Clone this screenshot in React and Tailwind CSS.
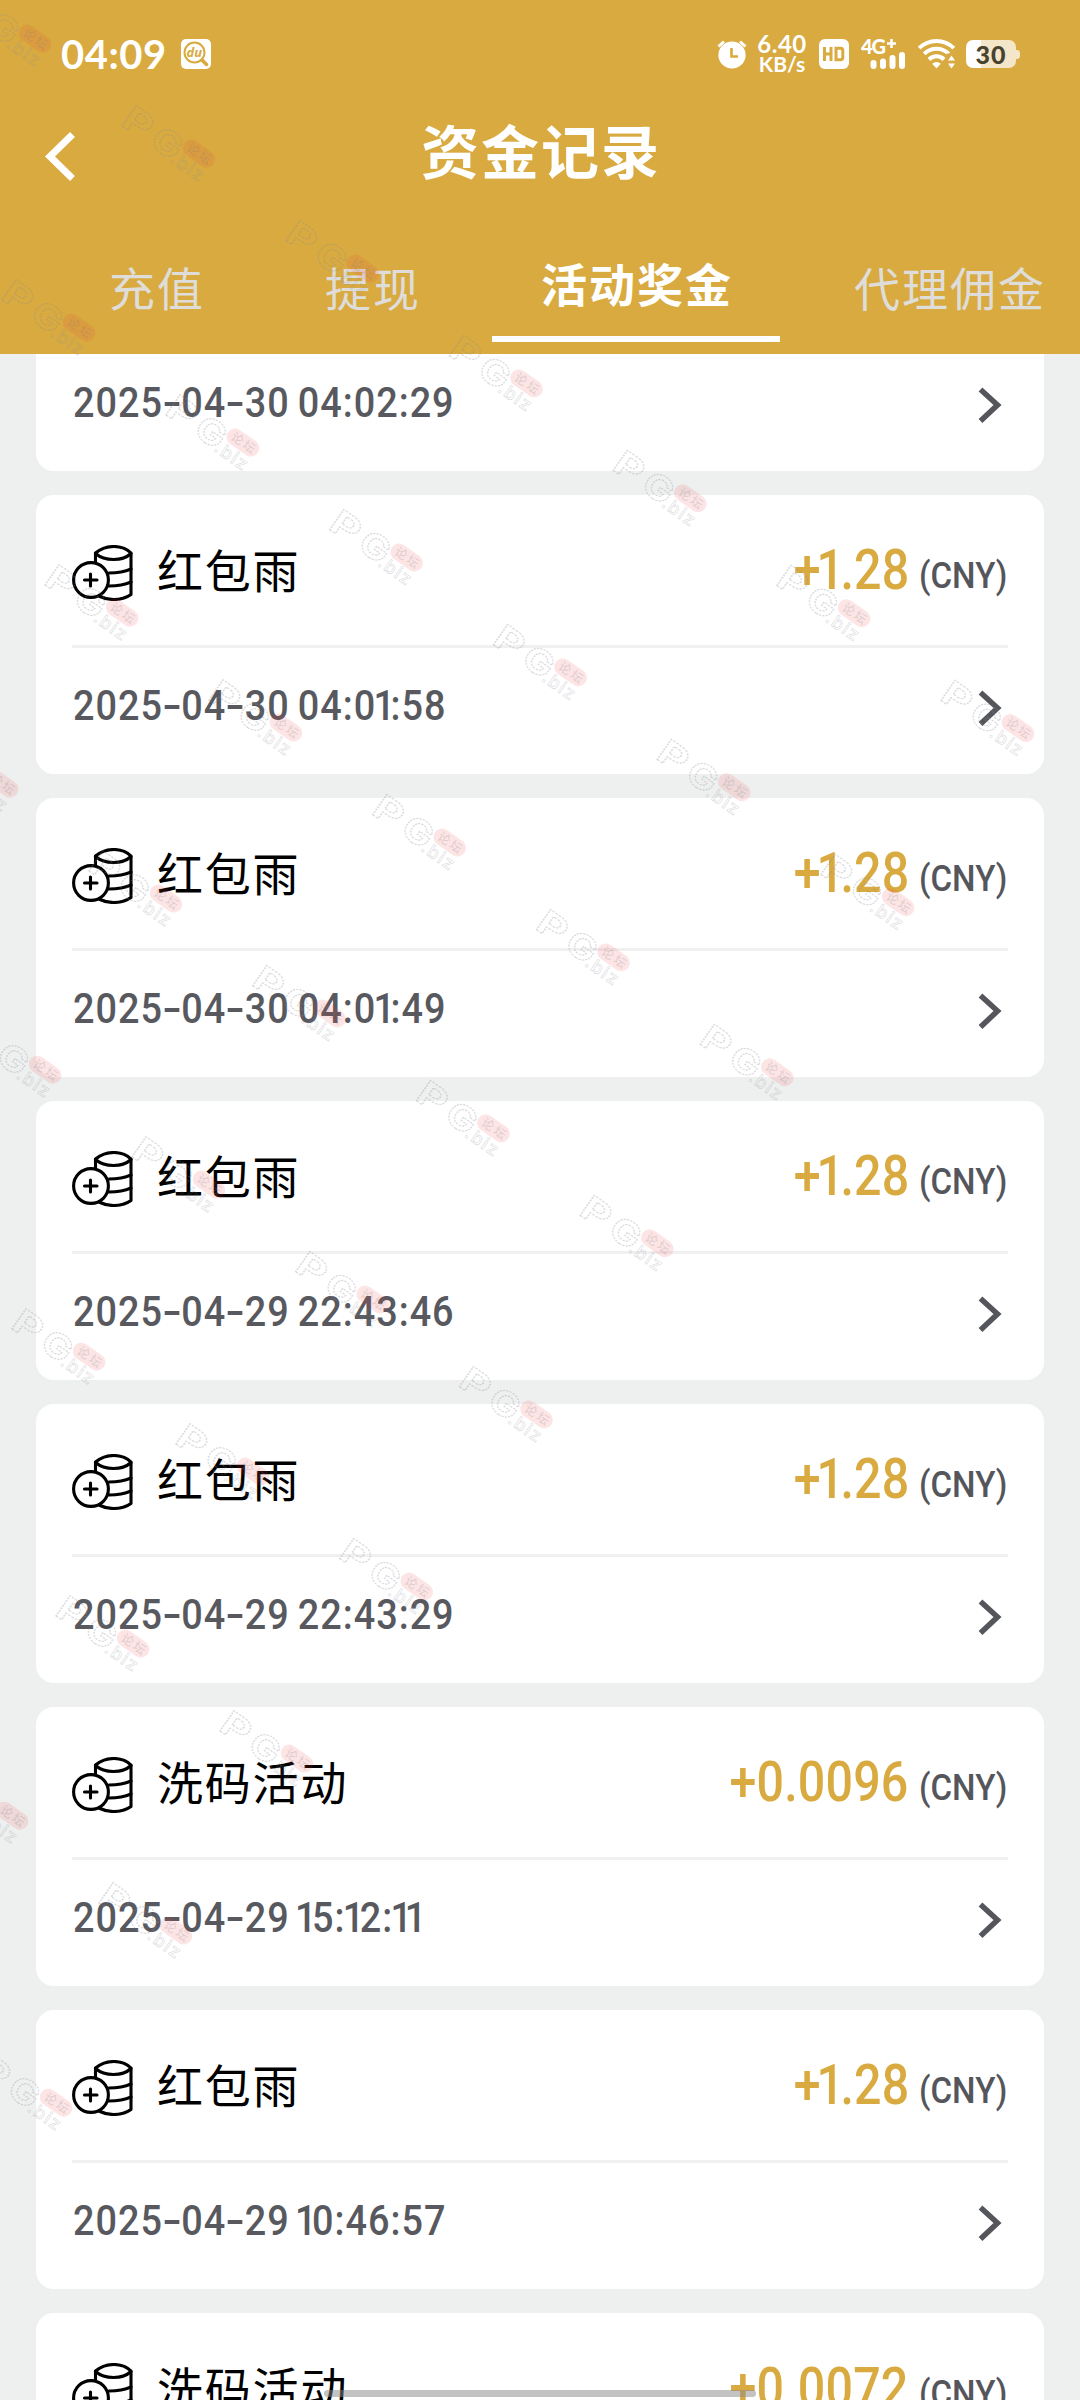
import React from "react";

const CJK = "font-['Noto_Sans_CJK_SC',sans-serif]";

const records = [
  { name: "红包雨", amount: "+1.28", date: "2025-04-30 04:02:29" },
  { name: "红包雨", amount: "+1.28", date: "2025-04-30 04:01:58" },
  { name: "红包雨", amount: "+1.28", date: "2025-04-30 04:01:49" },
  { name: "红包雨", amount: "+1.28", date: "2025-04-29 22:43:46" },
  { name: "红包雨", amount: "+1.28", date: "2025-04-29 22:43:29" },
  { name: "洗码活动", amount: "+0.0096", date: "2025-04-29 15:12:11" },
  { name: "红包雨", amount: "+1.28", date: "2025-04-29 10:46:57" },
  { name: "洗码活动", amount: "+0.0072", date: "" },
];

const tabs = ["充值", "提现", "活动奖金", "代理佣金"];

// Each diagonal of the watermark: first tile's corner and the number of tiles.
const diagonals = [
  [-43, -12, 7],
  [1, 277, 6],
  [44, 562, 5],
  [-76, 733, 5],
  [-33, 1019, 4],
  [11, 1306, 3],
  [55, 1593, 2],
  [-66, 1765, 2],
  [-22, 2052, 1],
];
const tiles = diagonals.flatMap(([x, y, n]) =>
  Array.from({ length: n }, (_, k) => [x + k * 163.8, y + k * 114.9])
);

function Watermark() {
  return (
    <svg className="pointer-events-none absolute inset-0 z-20" width="1080" height="2400" viewBox="0 0 1080 2400">
      {tiles.map(([x, y], i) => (
        <g key={i} transform={`translate(${x} ${y + 21}) rotate(35)`}>
          <g fill="none" stroke="#8a8a96" strokeOpacity="0.33" strokeWidth="1.200" strokeDasharray="2 1" fontFamily="Inter, sans-serif" fontWeight="700" fontSize="34">
            <text x="-1" y="1" textLength="29" lengthAdjust="spacingAndGlyphs">P</text>
            <text x="34" y="1" textLength="30" lengthAdjust="spacingAndGlyphs">G</text>
          </g>
          <text x="61" y="3" fill="none" stroke="#8a8a96" strokeOpacity="0.26" strokeWidth="0.8" fontFamily="Inter, sans-serif" fontWeight="500" fontSize="18" textLength="36">.biz</text>
          <rect x="63" y="-29" width="36" height="17" rx="8.500" fill="#f0383c" fillOpacity="0.13" />
          <text x="68" y="-16" fill="#808080" fillOpacity="0.22" fontFamily="Noto Sans CJK SC, sans-serif" fontWeight="500" fontSize="12.500" textLength="27">论坛</text>
        </g>
      ))}
    </svg>
  );
}

function StatusBar() {
  return (
    <div className="flex h-[108px] items-center pl-[61px] pr-[60px] text-white">
      <span className="font-['Lato',sans-serif] text-[40px] leading-none font-bold tracking-[0.500px]">04:09</span>
      <svg className="ml-[14px]" width="30" height="30" viewBox="0 0 30 30">
        <rect width="30" height="30" rx="5" fill="#fff" />
        <circle cx="13.5" cy="13.5" r="10" fill="none" stroke="#d8aa40" strokeWidth="2" />
        <path d="M21 21l4.5 4.5" stroke="#d8aa40" strokeWidth="3.5" strokeLinecap="round" />
        <text x="13.4" y="18.2" textAnchor="middle" fontSize="13" fontWeight="700" fontStyle="italic" fontFamily="Open Sans, sans-serif" fill="#d8aa40">du</text>
      </svg>
      <div className="ml-auto flex items-center">
        <svg width="30" height="30" viewBox="0 0 30 30">
          <circle cx="15" cy="16" r="13.6" fill="#fff" />
          <path d="M1.5 7.5L7 2.5M28.500 7.500L23 2.500" stroke="#fff" strokeWidth="3" />
          <path d="M14.500 9v8.500H21" fill="none" stroke="#d8aa40" strokeWidth="2.600" />
        </svg>
        <div className="ml-[9px] flex w-[52px] flex-col items-center font-['Lato',sans-serif] text-[24px] leading-[20px] font-bold">
          <span className="tracking-[0.5px]">6.40</span>
          <span className="text-[21px]">KB/s</span>
        </div>
        <svg className="ml-[11px]" width="30" height="30" viewBox="0 0 30 30">
          <rect width="30" height="30" rx="6" fill="#fff" />
          <path d="M5.500 8v14M12 8v14M5.500 15H12M17 9.200h4.500q2.300 0 2.300 2.300v7q0 2.300-2.300 2.300H17z" fill="none" stroke="#d8aa40" strokeWidth="3" />
        </svg>
        <svg className="ml-[12px]" width="46" height="32" viewBox="0 0 46 32">
          <text x="0" y="15.500" fontSize="20" fontWeight="900" fontFamily="Lato, sans-serif" fill="#fff" textLength="25">4G</text>
          <path d="M30.500 1v9M26 5.500h9" stroke="#fff" strokeWidth="2.600" />
          <path d="M12.500 25v3M22 23.500v4.500M31.500 20v8M41 17v11" stroke="#fff" strokeWidth="6" strokeLinecap="round" />
        </svg>
        <svg className="ml-[11px]" width="38" height="30" viewBox="0 0 38 30">
          <g fill="none" stroke="#fff" strokeWidth="4">
            <path d="M1.200 9.200a24.500 24.500 0 0 1 34.600 0" />
            <path d="M6.200 14.900a17.300 17.300 0 0 1 24.600 0" />
            <path d="M11 20.500a10.500 10.500 0 0 1 15 0" />
          </g>
          <path d="M18.500 29.500l-4.300-4.800a6.500 6.500 0 0 1 8.600 0z" fill="#fff" />
          <path d="M28.500 14.500h9v15.500h-9z" fill="#d8aa40" />
          <path d="M33.500 16.500l3.500 5h-7zM33.500 29.500l3.500-5h-7z" fill="#fff" />
        </svg>
        <div className="ml-[10px] flex h-[28px] w-[50px] items-center justify-center rounded-[7px] bg-[linear-gradient(90deg,#fff_30%,#f4e6c9_30%)] font-['Lato',sans-serif] text-[25px] leading-none font-black tracking-[1px] text-[#48432f]">
          30
        </div>
        <div className="h-[9px] w-[4px] rounded-r-[3px] bg-[#f4e6c9]" />
      </div>
    </div>
  );
}

function Header() {
  return (
    <header className="relative z-10 h-[354px] bg-[#d8aa40]">
      <StatusBar />
      <div className="flex h-[96px] items-center pl-[45px] pr-[75px]">
        <svg width="30" height="50" viewBox="0 0 30 50">
          <path d="M27.500 3.500L5 25.500l22.500 22" fill="none" stroke="#fff" strokeWidth="7" />
        </svg>
        <h1 className={`${CJK} flex-1 pb-[13px] pl-[2px] text-center text-[58px] leading-[83px] font-bold tracking-[2px] text-white`}>资金记录</h1>
      </div>
      <nav className="flex h-[138px] overflow-hidden pl-[49px]">
        {tabs.map((tab) =>
          tab === "活动奖金" ? (
            <div key={tab} className="flex w-[313px] shrink-0 flex-col items-start pl-[11px]">
              <span className={`${CJK} pt-[7px] pl-[49px] text-[46px] leading-[142px] font-bold tracking-[2px] text-white`}>{tab}</span>
              <span className="-mt-[17px] h-[6px] w-[288px] bg-white" />
            </div>
          ) : (
            <span key={tab} className={`${CJK} shrink-0 px-[60px] pt-[11px] text-[46px] leading-[142px] tracking-[2px] text-[#dfddda]`}>{tab}</span>
          )
        )}
      </nav>
    </header>
  );
}

function Coins() {
  return (
    <svg width="61" height="56" viewBox="0 0 61 56" fill="none" stroke="#000" strokeWidth="3.100" strokeLinecap="round" strokeLinejoin="round">
      <path d="M23.500 17V8q8-6.500 18.500-6.500T59 8v41.500q-7 5-17.500 5-7.500 0-13.500-3" />
      <path d="M23.500 8.500q7 6 18 6T59 8.500M37 28q13 0 22-4M37 41q13 0 22-4" />
      <circle cx="19" cy="35" r="17.400" />
      <path d="M18.500 29v12M12.500 35h12.500" />
    </svg>
  );
}

// Digits in a narrow face: hyphens are broad and the figure 1 is slim.
function DateText({ value }) {
  return (
    <span className="ml-[1px] origin-left scale-x-[0.9] font-['Roboto',sans-serif] text-[42px] leading-[48px] font-medium tracking-[1.100px] whitespace-pre text-[#58595f]">
      {value.split(/([-1: ])/).filter(Boolean).map((part, i) => {
        if (part === "-") return <span key={i} className="inline-block w-[20.500px] scale-x-150 text-center tracking-normal">-</span>;
        if (part === "1") return <span key={i} className="-ml-[3px] tracking-[-5px]">1</span>;
        if (part === " ") return <span key={i} className="tracking-[-1.500px]"> </span>;
        return <span key={i}>{part}</span>;
      })}
    </span>
  );
}

function Amount({ value }) {
  return (
    <span className="origin-right scale-x-[0.88] font-['Roboto',sans-serif] text-[55px] leading-[64px] font-medium tracking-[0.200px] text-[#d8aa40]">
      {value.split(/([1])/).map((part, i) =>
        part === "1" ? <span key={i} className="-ml-[5px] tracking-[-4px]">1</span> : <span key={i}>{part}</span>
      )}
    </span>
  );
}

function Card({ record }) {
  return (
    <article className="h-[279px] shrink-0 rounded-[18px] bg-white px-[36px]">
      <div className="flex h-[150px] items-center">
        <div className="mt-[6px]"><Coins /></div>
        <span className={`${CJK} -mt-[5px] ml-[24px] text-[46px] leading-[68px] tracking-[1.800px] text-black`}>{record.name}</span>
        <div className="ml-auto flex items-baseline">
          <Amount value={record.amount} />
          <span className="relative -top-px ml-[10px] w-[89px] origin-left scale-x-[0.92] font-['Roboto',sans-serif] text-[36px] leading-[42px] font-medium text-[#55565c]">(CNY)</span>
        </div>
      </div>
      <div className="h-[3px] bg-[#f0f0f0]" />
      <div className="flex h-[126px] items-center justify-between pb-[10px] pr-[6px]">
        <DateText value={record.date} />
        <svg className="mt-[4px]" width="24" height="36" viewBox="0 0 24 36">
          <path d="M2.500 2.500L19.500 18 2.500 34" fill="none" stroke="#55565c" strokeWidth="5.500" />
        </svg>
      </div>
    </article>
  );
}

export default function App() {
  return (
    <div className="relative h-[2400px] w-[1080px] overflow-hidden bg-[#eef0ef]">
      <Header />
      <main className="-mt-[162px] flex flex-col gap-[24px] px-[36px]">
        {records.map((r, i) => (
          <Card key={i} record={r} />
        ))}
      </main>
      <Watermark />
      <div className="absolute bottom-[3px] left-[324px] z-30 h-[7px] w-[432px] rounded-full bg-[#888888]/50" />
    </div>
  );
}
